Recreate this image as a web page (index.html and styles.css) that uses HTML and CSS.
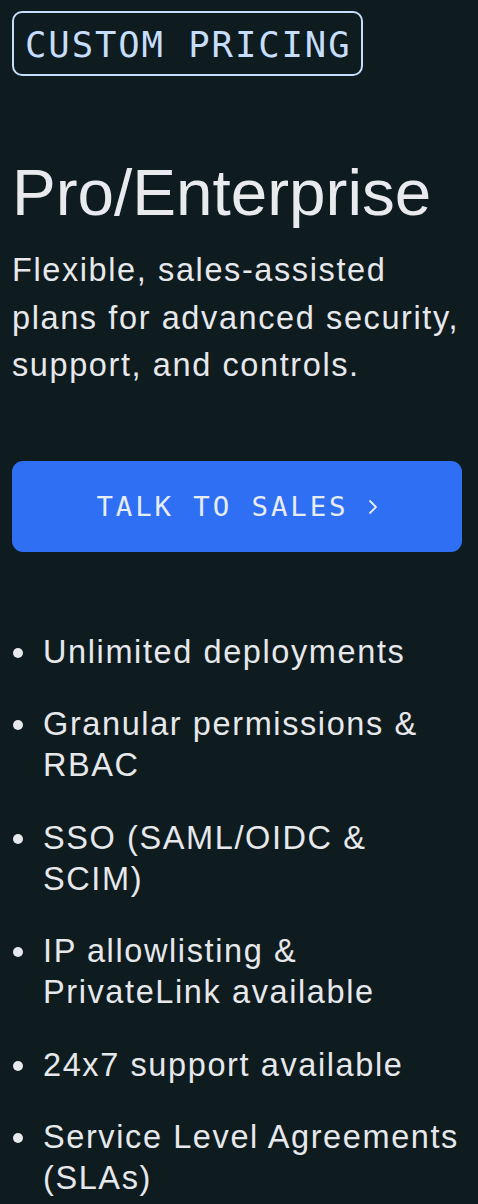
FILE: index.html
```html
<!DOCTYPE html>
<html lang="en">
<head>
<meta charset="utf-8">
<title>Pro/Enterprise</title>
<link rel="stylesheet" href="styles.css">
</head>
<body>
<section class="plan">
  <div class="badge">CUSTOM PRICING</div>
  <h1 class="title">Pro/Enterprise</h1>
  <p class="lead">Flexible, sales-assisted plans for advanced security, support, and controls.</p>
  <a class="cta" href="#"><span class="cta-label">TALK TO SALES</span><svg class="cta-icon" width="10" height="16" viewBox="0 0 10 16" aria-hidden="true"><path d="M1.5 1.5 L8 8 L1.5 14.5" fill="none" stroke="currentColor" stroke-width="1.8"/></svg></a>
  <ul class="features">
    <li>Unlimited deployments</li>
    <li>Granular permissions &amp; RBAC</li>
    <li>SSO (SAML/OIDC &amp; SCIM)</li>
    <li>IP allowlisting &amp; PrivateLink available</li>
    <li>24x7 support available</li>
    <li>Service Level Agreements (SLAs)</li>
  </ul>
</section>
</body>
</html>
```

FILE: styles.css
```css
html, body {
  margin: 0;
  padding: 0;
  background: #0e1b1f;
}

body {
  font-family: "Liberation Sans", Arial, sans-serif;
  color: #e6e8eb;
}

.plan {
  display: flex;
  flex-direction: column;
  align-items: flex-start;
  padding: 11px 12px 0 12px;
}

.badge {
  font-family: "DejaVu Sans Mono", "Liberation Mono", monospace;
  font-size: 35.6px;
  line-height: 41px;
  letter-spacing: 1.9px;
  color: #c6ddfb;
  border: 2px solid #c6ddfb;
  border-radius: 10px;
  padding: 11px 10px 9px 11px;
}

.title {
  margin: 81px 0 0 0;
  font-size: 65.6px;
  line-height: 72px;
  font-weight: 400;
  color: #e8eaed;
}

.lead {
  margin: 18px 0 0 0;
  max-width: 452px;
  font-size: 32.5px;
  line-height: 47.5px;
  letter-spacing: 1.6px;
}

.cta {
  margin-top: 71px;
  align-self: stretch;
  margin-right: 4px;
  height: 91px;
  display: flex;
  align-items: center;
  justify-content: center;
  gap: 22px;
  background: #2e6ff3;
  border-radius: 11px;
  text-decoration: none;
  font-family: "DejaVu Sans Mono", "Liberation Mono", monospace;
  font-size: 27.4px;
  letter-spacing: 2.9px;
  color: #e8ecf4;
}

.cta-label {
  margin-right: -2.9px;
}

.cta-icon {
  display: block;
  margin-top: 1px;
}

.features {
  list-style: none;
  margin: 80px 0 0 0;
  padding: 0;
  display: flex;
  flex-direction: column;
  gap: 31.5px;
  font-size: 32.5px;
  line-height: 41px;
  letter-spacing: 1.6px;
}

.features li {
  position: relative;
  padding-left: 31px;
}

.features li::before {
  content: "";
  position: absolute;
  left: 1px;
  top: 16px;
  width: 10px;
  height: 10px;
  border-radius: 50%;
  background: #e6e8eb;
}
```
